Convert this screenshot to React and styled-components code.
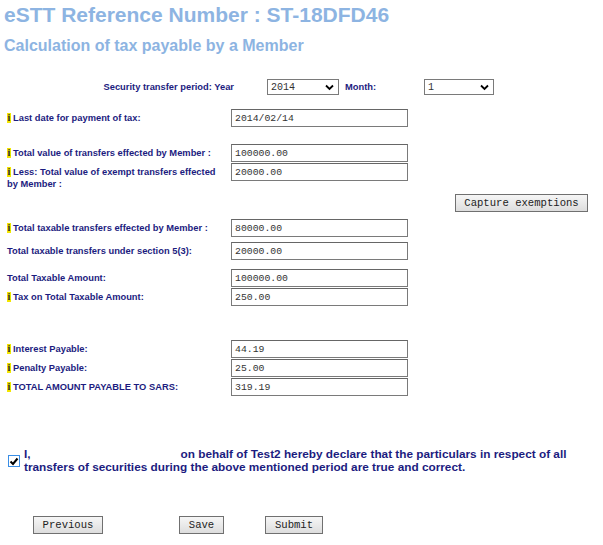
import React from "react";
import styled, { createGlobalStyle } from "styled-components";

const GlobalStyle = createGlobalStyle`
  html, body {
    margin: 0;
    padding: 0;
    background: #ffffff;
  }
  body {
    font-family: "Liberation Sans", Arial, sans-serif;
  }
`;

const Page = styled.div`
  width: 603px;
  height: 545px;
  padding: 3px 4px 0;
  box-sizing: border-box;
  overflow: hidden;
`;

const Title = styled.h1`
  margin: 0;
  font-size: 21px;
  line-height: 24px;
  font-weight: bold;
  color: #8db4e2;
`;

const SubTitle = styled.h2`
  margin: 10px 0 0;
  font-size: 16px;
  line-height: 18px;
  font-weight: bold;
  color: #8db4e2;
`;

const PeriodRow = styled.div`
  display: flex;
  align-items: center;
  margin-top: 24px;
  height: 16px;
`;

const PeriodLabel = styled.span`
  width: ${({ $w }) => $w}px;
  box-sizing: border-box;
  padding-left: ${({ $pl }) => $pl || 0}px;
  text-align: ${({ $align }) => $align || "left"};
  font-size: 9.33px;
  font-weight: bold;
  color: #1c1c80;
  white-space: nowrap;
`;

const Select = styled.div`
  width: ${({ $w }) => $w}px;
  height: 16px;
  margin-left: ${({ $ml }) => $ml || 0}px;
  box-sizing: border-box;
  border: 1px solid #7a7a7a;
  background: #fff;
  display: flex;
  align-items: center;
  justify-content: space-between;
  padding: 0 4px 0 3px;
  font-family: "Liberation Mono", "Courier New", monospace;
  font-size: 10px;
  color: #333;
`;

const Chevron = () => (
  <svg width="9" height="7" viewBox="0 0 9 7">
    <polyline
      points="1,1.5 4.5,5 8,1.5"
      fill="none"
      stroke="#000"
      strokeWidth="1.8"
    />
  </svg>
);

const Row = styled.div`
  display: flex;
  align-items: flex-start;
  margin-top: ${({ $mt }) => $mt || 0}px;
  padding-left: 3px;
`;

const Label = styled.div`
  width: 224px;
  box-sizing: border-box;
  padding-top: 3px;
  padding-right: 10px;
  font-size: 9.33px;
  line-height: 12px;
  font-weight: bold;
  color: #1c1c80;
  white-space: nowrap;
`;

const Info = styled.span`
  display: inline-block;
  vertical-align: top;
  width: 4px;
  height: 10px;
  margin: 1px 2px 0 0;
  background: #f3e600;
  color: #2a2a2a;
  font-family: "Liberation Serif", "Times New Roman", serif;
  font-weight: bold;
  font-size: 10px;
  line-height: 10px;
  text-align: center;
  overflow: hidden;
`;

const Field = styled.div`
  width: 177px;
  height: 18px;
  flex-shrink: 0;
  box-sizing: border-box;
  border: 1px solid #7a7a7a;
  border-top-color: #666;
  background: #fff;
  padding: 0 3px;
  display: flex;
  align-items: center;
  font-family: "Liberation Mono", "Courier New", monospace;
  font-size: 9.8px;
  color: #333;
`;

const ButtonRow = styled.div`
  display: flex;
  justify-content: ${({ $justify }) => $justify || "flex-start"};
  margin-top: ${({ $mt }) => $mt || 0}px;
  padding-left: ${({ $pl }) => $pl || 0}px;
  padding-right: ${({ $pr }) => $pr || 0}px;
`;

const Button = styled.button`
  height: 18px;
  width: ${({ $w }) => $w}px;
  margin-left: ${({ $ml }) => $ml || 0}px;
  padding: 0;
  box-sizing: border-box;
  border: 1px solid #707070;
  border-radius: 0;
  background: linear-gradient(#f6f6f6, #dddddd);
  font-family: "Liberation Mono", "Courier New", monospace;
  font-size: 10.6px;
  color: #222;
`;

const Declaration = styled.div`
  display: flex;
  align-items: center;
  margin-top: 52px;
  padding-left: 4px;
`;

const Check = styled.span`
  width: 12px;
  height: 12px;
  box-sizing: border-box;
  border: 1px solid #3a8ee6;
  background: #fff;
  display: flex;
  align-items: center;
  justify-content: center;
  flex-shrink: 0;
  margin-right: 4px;
`;

const DeclText = styled.p`
  margin: 0;
  font-size: 11.8px;
  line-height: 13px;
  font-weight: bold;
  color: #1c1c80;
  white-space: nowrap;
`;

const NameBlank = styled.span`
  display: inline-block;
  width: 150px;
`;

const rows = [
  { label: ["Last date for payment of tax:"], value: "2014/02/14", info: true, mt: 14 },
  { label: ["Total value of transfers effected by Member :"], value: "100000.00", info: true, mt: 17 },
  { label: ["Less: Total value of exempt transfers effected", "by Member :"], value: "20000.00", info: true, mt: 1 },
];

const rows2 = [
  { label: ["Total taxable transfers effected by Member :"], value: "80000.00", info: true, mt: 7 },
  { label: ["Total taxable transfers under section 5(3):"], value: "20000.00", mt: 5 },
  { label: ["Total Taxable Amount:"], value: "100000.00", mt: 9 },
  { label: ["Tax on Total Taxable Amount:"], value: "250.00", info: true, mt: 1 },
  { label: ["Interest Payable:"], value: "44.19", info: true, mt: 34 },
  { label: ["Penalty Payable:"], value: "25.00", info: true, mt: 1 },
  { label: ["TOTAL AMOUNT PAYABLE TO SARS:"], value: "319.19", info: true, mt: 1 },
];

function FormRow({ label, value, info, mt }) {
  return (
    <Row $mt={mt}>
      <Label>
        {info && <Info>i</Info>}
        {label.map((line, i) => (
          <React.Fragment key={line}>
            {i > 0 && <br />}
            {line}
          </React.Fragment>
        ))}
      </Label>
      <Field>{value}</Field>
    </Row>
  );
}

export default function App() {
  return (
    <Page>
      <GlobalStyle />
      <Title>eSTT Reference Number : ST-18DFD46</Title>
      <SubTitle>Calculation of tax payable by a Member</SubTitle>

      <PeriodRow>
        <PeriodLabel $w={230} $align="right">
          Security transfer period: Year
        </PeriodLabel>
        <Select $w={72} $ml={33}>
          <span>2014</span>
          <Chevron />
        </Select>
        <PeriodLabel $w={85} $pl={6}>
          Month:
        </PeriodLabel>
        <Select $w={70}>
          <span>1</span>
          <Chevron />
        </Select>
      </PeriodRow>

      {rows.map((r) => (
        <FormRow key={r.label[0]} {...r} />
      ))}

      <ButtonRow $justify="flex-end" $pr={11} $mt={4}>
        <Button $w={133}>Capture exemptions</Button>
      </ButtonRow>

      {rows2.map((r) => (
        <FormRow key={r.label[0]} {...r} />
      ))}

      <Declaration>
        <Check>
          <svg width="10" height="9" viewBox="0 0 10 9">
            <polyline
              points="1.5,4.5 4,7 8.5,1.5"
              fill="none"
              stroke="#000"
              strokeWidth="2"
            />
          </svg>
        </Check>
        <DeclText>
          I,<NameBlank />on behalf of Test2 hereby declare that the particulars in respect of all
          <br />
          transfers of securities during the above mentioned period are true and correct.
        </DeclText>
      </Declaration>

      <ButtonRow $pl={29} $mt={42}>
        <Button $w={70}>Previous</Button>
        <Button $w={45} $ml={76}>Save</Button>
        <Button $w={58} $ml={41}>Submit</Button>
      </ButtonRow>
    </Page>
  );
}
